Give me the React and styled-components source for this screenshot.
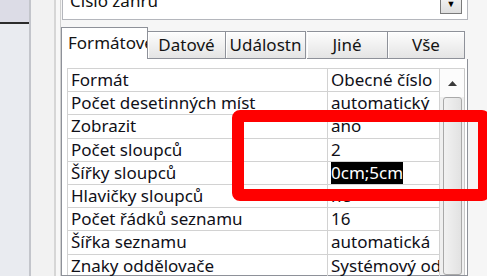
import React from "react";
import styled, { createGlobalStyle } from "styled-components";

const Global = createGlobalStyle`
  html, body {
    margin: 0;
    padding: 0;
    background: #fafafa;
  }
  body {
    font-family: "Noto Sans", "Open Sans", sans-serif;
  }
`;

const Screen = styled.div`
  display: flex;
  width: 487px;
  height: 276px;
  overflow: hidden;
  position: relative;
  background: #fafafa;
`;

const NavPane = styled.div`
  width: 29px;
  flex-shrink: 0;
  display: flex;
  flex-direction: column;
  background: #e9ebf0;
`;

const NavHeader = styled.div`
  height: 22px;
  background: #dcdce6;
  border-bottom: 2px solid #2b2b2b;
`;

const Splitter = styled.div`
  width: 23px;
  flex-shrink: 0;
  background: #f2f2f2;
  border-left: 2px solid #c3c5cb;
  border-right: 2px solid #d6d6d6;
`;

const Gap = styled.div`
  width: 4px;
  flex-shrink: 0;
  background: #f7f7f7;
`;

const Sheet = styled.div`
  flex: 1;
  min-width: 0;
  display: flex;
  flex-direction: column;
  background: #f6f6f6;
  padding-right: 19px;
  border-left: 1px solid #d0d0d0;
`;

const Combo = styled.div`
  display: flex;
  height: 30px;
  margin: -11px 0 0 1px;
  background: #fff;
  border: 1px solid #b4b6bc;
  border-top: none;
  font-size: 17px;
  color: #111;
`;

const ComboText = styled.div`
  flex: 1;
  padding: 1px 0 0 7px;
  line-height: 22px;
  white-space: nowrap;
`;

const ComboButton = styled.div`
  width: 22px;
  height: 23px;
  margin: 2px 5px 0 0;
  border: 1px solid #7a7a7a;
  background: linear-gradient(#fbfbfb, #dedede);
  display: flex;
  align-items: flex-end;
  justify-content: center;
  padding-bottom: 3px;
  box-sizing: border-box;
  font-size: 9px;
  color: #000;
`;

const Tabs = styled.div`
  display: flex;
  align-items: flex-end;
  height: 32px;
  margin-top: 7px;
`;

const Tab = styled.div`
  box-sizing: border-box;
  flex-shrink: 0;
  width: ${(p) => p.$w}px;
  height: ${(p) => (p.$active ? 32 : 28)}px;
  background: ${(p) => (p.$active ? "#fff" : "linear-gradient(#fdfdfd, #e4e4e4)")};
  border: 1px solid #8e9199;
  border-bottom: ${(p) => (p.$active ? "none" : "1px solid #8e9199")};
  border-left: ${(p) => (p.$active ? "1px solid #8e9199" : "none")};
  border-right: 1px solid #8e9199;
  margin-right: ${(p) => p.$mr || 0}px;
  font-size: 17px;
  color: #141414;
  line-height: ${(p) => (p.$active ? 30 : 26)}px;
  text-align: ${(p) => (p.$active ? "left" : "center")};
  padding-left: ${(p) => (p.$active ? 6 : 0)}px;
  white-space: nowrap;
  overflow: hidden;
  box-shadow: ${(p) => (p.$active ? "none" : "inset 1px 1px 0 #fff")};
`;

const Panel = styled.div`
  flex: 1;
  min-height: 0;
  background: #fff;
  border: 1px solid #8e9199;
  border-top: none;
  padding: 9px 2px 0 5px;
  display: flex;
`;

const Grid = styled.div`
  flex: 1;
  min-width: 0;
  display: flex;
  border-top: 1px solid #d2d2d2;
  border-left: 1px solid #d2d2d2;
`;

const Rows = styled.div`
  flex: 1;
  min-width: 0;
  display: flex;
  flex-direction: column;
`;

const Row = styled.div`
  display: flex;
  height: 23.2px;
  flex-shrink: 0;
  box-sizing: border-box;
  border-bottom: 1px solid #d2d2d2;
  font-size: 17px;
  line-height: 22px;
  color: #101018;
  white-space: nowrap;
`;

const Label = styled.div`
  width: 260px;
  flex-shrink: 0;
  box-sizing: border-box;
  padding-left: 3px;
  border-right: 1px solid #d2d2d2;
  overflow: hidden;
`;

const Value = styled.div`
  flex: 1;
  min-width: 0;
  padding-left: 3px;
  border-right: 1px solid #d2d2d2;
  overflow: hidden;
`;

const Selected = styled.span`
  background: #000;
  color: #fff;
`;

const Scrollbar = styled.div`
  width: 24px;
  flex-shrink: 0;
  display: flex;
  flex-direction: column;
  align-items: center;
  background: #f0f0f0;
  border-right: 1px solid #c8c8c8;
`;

const Arrow = styled.div`
  height: 28px;
  width: 100%;
  background: #fcfcfc;
  display: flex;
  align-items: center;
  justify-content: center;
`;

const Thumb = styled.div`
  flex: 1;
  width: 19px;
  box-sizing: border-box;
  border: 1px solid #a9a9a9;
  border-radius: 3px;
  background: linear-gradient(90deg, #f2f2f2, #e2e2e2);
`;

const Highlight = styled.div`
  position: absolute;
  left: 232px;
  top: 110px;
  width: 258px;
  height: 91px;
  box-sizing: border-box;
  border: 12px solid #ff0000;
  border-radius: 8px;
  pointer-events: none;
`;

const rows = [
  ["Formát", "Obecné číslo"],
  ["Počet desetinných míst", "automatický"],
  ["Zobrazit", "ano"],
  ["Počet sloupců", "2"],
  ["Šířky sloupců", null],
  ["Hlavičky sloupců", "ne"],
  ["Počet řádků seznamu", "16"],
  ["Šířka seznamu", "automatická"],
  ["Znaky oddělovače", "Systémový oddělovač"],
];

const tabs = [
  { name: "Datové", w: 78 },
  { name: "Událostn", w: 80, mr: 1 },
  { name: "Jiné", w: 81 },
  { name: "Vše", w: 77 },
];

export default function App() {
  return (
    <Screen>
      <Global />
      <NavPane>
        <NavHeader />
      </NavPane>
      <Splitter />
      <Gap />
      <Sheet>
        <Combo>
          <ComboText>Číslo žánru</ComboText>
          <ComboButton>▼</ComboButton>
        </Combo>
        <Tabs>
          <Tab $active $w={87}>Formátové</Tab>
          {tabs.map((t) => (
            <Tab key={t.name} $w={t.w} $mr={t.mr}>
              {t.name}
            </Tab>
          ))}
        </Tabs>
        <Panel>
          <Grid>
            <Rows>
              {rows.map(([label, value]) => (
                <Row key={label}>
                  <Label>{label}</Label>
                  <Value>{value === null ? <Selected>0cm;5cm</Selected> : value}</Value>
                </Row>
              ))}
            </Rows>
            <Scrollbar>
              <Arrow>
                <svg width="9" height="5" viewBox="0 0 9 5">
                  <path d="M0 5 L4.5 0 L9 5 Z" fill="#3a3a3a" />
                </svg>
              </Arrow>
              <Thumb />
            </Scrollbar>
          </Grid>
        </Panel>
      </Sheet>
      <Highlight />
    </Screen>
  );
}
